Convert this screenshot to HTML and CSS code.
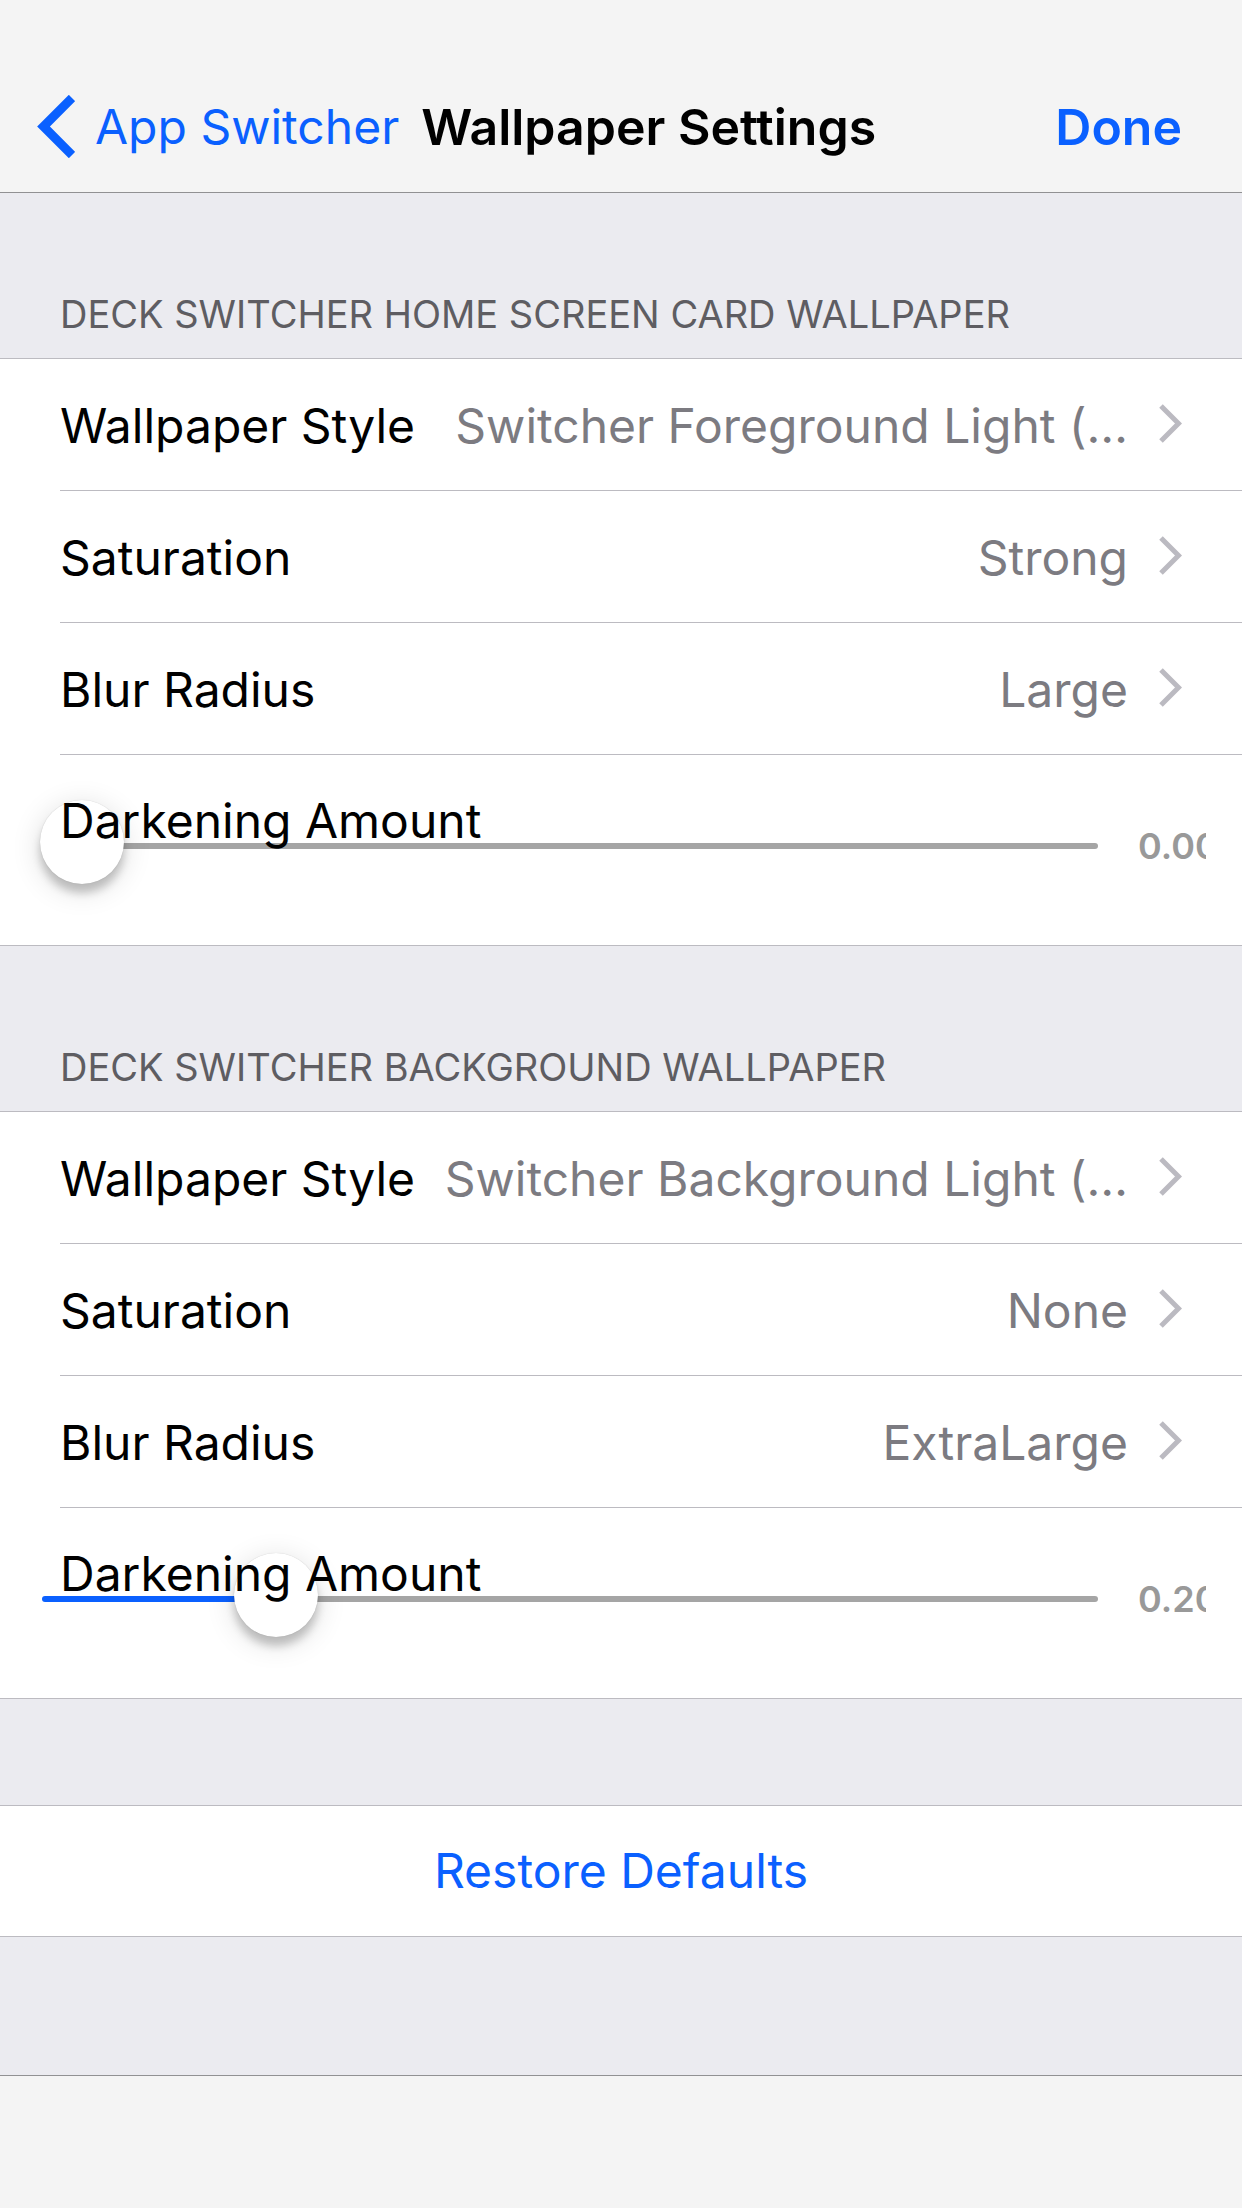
FILE: index.html
```html
<!DOCTYPE html>
<html lang="en">
<head>
<meta charset="utf-8">
<meta name="viewport" content="width=device-width, initial-scale=1">
<title>Wallpaper Settings</title>
<link rel="stylesheet" href="styles.css">
</head>
<body>
<svg class="sprite" width="0" height="0" aria-hidden="true">
  <symbol id="disclosure" viewBox="0 0 23 39"><path d="M2 2 19.500 19.500 2 37" fill="none" stroke="currentColor" stroke-width="5"/></symbol>
</svg>
<header class="navbar">
  <a class="back" href="#app-switcher">
    <svg class="back-icon" viewBox="0 0 38 63" aria-hidden="true"><path d="M35 3 6.500 31.500 35 60" fill="none" stroke="currentColor" stroke-width="9"/></svg>
    App Switcher
  </a>
  <h1 class="title">Wallpaper Settings</h1>
  <button class="done" type="button">Done</button>
</header>

<main class="content">
  <section>
    <h2 class="section-title">DECK SWITCHER HOME SCREEN CARD WALLPAPER</h2>
    <ul class="group">
      <li class="item"><button class="row" type="button"><span class="name">Wallpaper Style</span><span class="value">Switcher Foreground Light (…</span><svg class="chevron" aria-hidden="true"><use href="#disclosure"/></svg></button></li>
      <li class="item"><button class="row" type="button"><span class="name">Saturation</span><span class="value">Strong</span><svg class="chevron" aria-hidden="true"><use href="#disclosure"/></svg></button></li>
      <li class="item"><button class="row" type="button"><span class="name">Blur Radius</span><span class="value">Large</span><svg class="chevron" aria-hidden="true"><use href="#disclosure"/></svg></button></li>
      <li class="item slider-row">
        <label class="slider-label" for="card-darkening">Darkening Amount</label>
        <div class="slider-controls">
          <input class="slider" id="card-darkening" type="range" min="0" max="1" step="0.01" value="0" style="--fill: 0%">
          <output class="amount" for="card-darkening">0.00</output>
        </div>
      </li>
    </ul>
  </section>

  <section>
    <h2 class="section-title">DECK SWITCHER BACKGROUND WALLPAPER</h2>
    <ul class="group">
      <li class="item"><button class="row" type="button"><span class="name">Wallpaper Style</span><span class="value">Switcher Background Light (…</span><svg class="chevron" aria-hidden="true"><use href="#disclosure"/></svg></button></li>
      <li class="item"><button class="row" type="button"><span class="name">Saturation</span><span class="value">None</span><svg class="chevron" aria-hidden="true"><use href="#disclosure"/></svg></button></li>
      <li class="item"><button class="row" type="button"><span class="name">Blur Radius</span><span class="value">ExtraLarge</span><svg class="chevron" aria-hidden="true"><use href="#disclosure"/></svg></button></li>
      <li class="item slider-row">
        <label class="slider-label" for="background-darkening">Darkening Amount</label>
        <div class="slider-controls">
          <input class="slider" id="background-darkening" type="range" min="0" max="1" step="0.01" value="0.2" style="--fill: 20%">
          <output class="amount" for="background-darkening">0.20</output>
        </div>
      </li>
    </ul>
  </section>

  <section class="actions">
    <div class="group"><button class="restore" type="button">Restore Defaults</button></div>
  </section>
</main>

<footer class="toolbar"></footer>
</body>
</html>
```
FILE: styles.css
```css
:root {
  --tint: #0a60ff;
  --separator: #bcbbc1;
  --side: 60px;
}

* { box-sizing: border-box; }

body {
  display: flex;
  flex-direction: column;
  min-height: 100vh;
  margin: 0;
  background: #ebebf0;
  color: #000;
  font-family: Inter, "Liberation Sans", sans-serif;
  font-size: 48px;
  line-height: 60px;
}

button {
  padding: 0;
  border: 0;
  background: none;
  color: inherit;
  font: inherit;
}

.sprite { position: absolute; }

.navbar {
  display: flex;
  align-items: center;
  min-height: 193px;
  padding: 61px var(--side) 0 37px;
  border-bottom: 1px solid #919193;
  background: #f4f4f4;
  white-space: nowrap;
}

.back {
  display: flex;
  align-items: center;
  gap: 20px;
  color: var(--tint);
  text-decoration: none;
}

.back-icon {
  width: 38px;
  height: 63px;
}

.title {
  margin: 0 0 0 22px;
  font-size: 50px;
  font-weight: 600;
}

.done {
  margin-left: auto;
  color: var(--tint);
  font-size: 50px;
  font-weight: 600;
}

.content { flex: 1; }

.section-title {
  margin: 0;
  padding: 97px var(--side) 20px;
  color: #5e5d62;
  font-size: 38px;
  font-weight: 400;
  line-height: 48px;
}

.group {
  margin: 0;
  padding: 0;
  border: solid var(--separator);
  border-width: 1px 0;
  background: #fff;
  list-style: none;
}

.item { padding-left: var(--side); }

.row {
  display: flex;
  align-items: center;
  width: 100%;
  height: 132px;
  padding: 0 var(--side) 2px 0;
  border-bottom: 1px solid var(--separator);
  text-align: left;
  white-space: nowrap;
}

.name,
.value { padding-top: 4px; }

.value {
  flex: 1;
  min-width: 0;
  padding-left: 16px;
  color: #7c7b81;
  text-align: right;
}

.chevron {
  width: 23px;
  height: 39px;
  margin-left: 31px;
  color: #bbbac1;
}

.slider-row {
  display: grid;
  height: 190px;
  padding: 0;
}

.slider-label,
.slider-controls { grid-area: 1 / 1; }

.slider-label {
  z-index: 1;
  padding-left: var(--side);
  line-height: 132px;
  pointer-events: none;
}

.slider-controls {
  display: flex;
  align-items: center;
  gap: 40px;
  height: 182px;
  padding: 0 36px 0 42px;
}

.slider {
  flex: 1;
  min-width: 0;
  height: 84px;
  margin: 0;
  appearance: none;
  background: none;
}

.slider::-webkit-slider-runnable-track {
  height: 6px;
  border-radius: 3px;
  background: linear-gradient(to right, var(--tint) var(--fill), #a5a5a5 var(--fill));
}

.slider::-webkit-slider-thumb {
  width: 84px;
  height: 84px;
  margin: -43px -2px 0;
  appearance: none;
  border-radius: 50%;
  background: #fff;
  box-shadow: 0 0 1px rgba(0, 0, 0, 0.2), 0 9px 9px rgba(0, 0, 0, 0.2), 0 6px 30px rgba(0, 0, 0, 0.14);
}

.amount {
  width: 68px;
  overflow: hidden;
  color: #999;
  font-size: 36px;
  font-weight: 600;
  white-space: nowrap;
}

.actions { padding-top: 106px; }

.restore {
  width: 100%;
  height: 130px;
  color: var(--tint);
}

.toolbar {
  min-height: 133px;
  border-top: 1px solid #919193;
  background: #f4f4f4;
}
```
